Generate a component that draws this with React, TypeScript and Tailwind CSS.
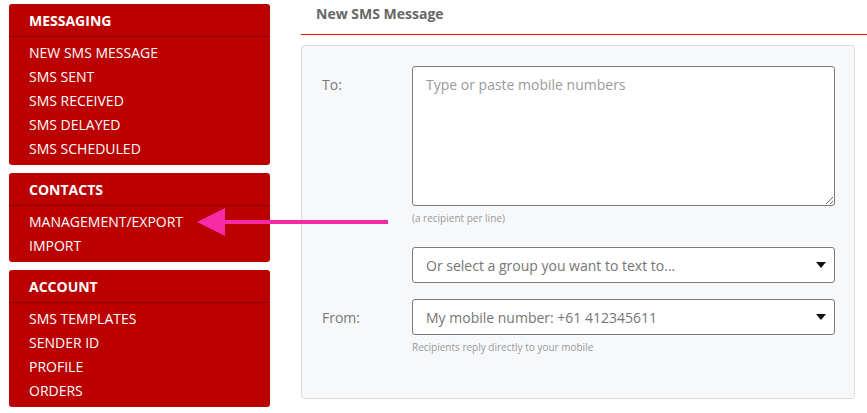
const SECTIONS = [
  { title: 'MESSAGING', items: ['NEW SMS MESSAGE', 'SMS SENT', 'SMS RECEIVED', 'SMS DELAYED', 'SMS SCHEDULED'] },
  { title: 'CONTACTS', items: ['MANAGEMENT/EXPORT', 'IMPORT'] },
  { title: 'ACCOUNT', items: ['SMS TEMPLATES', 'SENDER ID', 'PROFILE', 'ORDERS'] },
]

function Caret() {
  return (
    <svg width="10" height="6" viewBox="0 0 10 6" className="shrink-0">
      <path d="M0 0h10L5 6z" fill="#111" />
    </svg>
  )
}

function SelectBox({ text }: { text: string }) {
  return (
    <div className="flex h-9 items-center justify-between rounded-[3px] border border-[#7a7a7a] bg-white pl-[13px] pr-[8px] text-[14px] text-[#757575]">
      <span>{text}</span>
      <Caret />
    </div>
  )
}

export default function App() {
  return (
    <div
      className="relative flex h-[413px] w-[867px] overflow-hidden bg-white"
      style={{ fontFamily: '"Open Sans", "Liberation Sans", sans-serif' }}
    >
      {/* Sidebar */}
      <div className="ml-[9px] mt-[4px] flex w-[261px] shrink-0 flex-col gap-2">
        {SECTIONS.map((section) => (
          <div key={section.title} className="rounded-[3px] bg-[#bb0000] text-white">
            <div className="flex h-[33px] items-center border-b border-[#8e0000] pl-5 text-[14px] font-bold">
              {section.title}
            </div>
            <ul className="py-1 pl-5">
              {section.items.map((item) => (
                <li key={item} className="h-6 text-[14px] font-medium leading-6">
                  {item}
                </li>
              ))}
            </ul>
          </div>
        ))}
      </div>

      {/* Main */}
      <div className="ml-[31px] flex min-w-0 flex-1 flex-col">
        <div className="flex h-[35px] items-center border-b border-[#ff0000] pl-[15px] pb-[8px] text-[14px] font-bold text-[#666]">
          New SMS Message
        </div>
        <div className="mr-[12px] mt-[10px] rounded-[3px] border border-[#dcdcdc] bg-[#f7f8fa] pb-[43px] pl-[20px] pr-[19px] pt-[20px]">
          <div className="flex">
            <div className="w-[90px] shrink-0 pt-[8px] text-[14px] text-[#777]">To:</div>
            <div className="flex-1">
              <textarea
                placeholder="Type or paste mobile numbers"
                className="block h-[140px] w-full rounded-[3px] border border-[#7a7a7a] bg-white px-[13px] py-[7px] text-[14px] text-[#333] placeholder:text-[#9a9a9a] focus:outline-none"
              />
              <div className="mt-[5px] text-[10px] text-[#999]">(a recipient per line)</div>
              <div className="mt-[21px]">
                <SelectBox text="Or select a group you want to text to..." />
              </div>
            </div>
          </div>
          <div className="mt-[16px] flex">
            <div className="w-[90px] shrink-0 pt-[8px] text-[14px] text-[#777]">From:</div>
            <div className="flex-1">
              <SelectBox text="My mobile number: +61 412345611" />
              <div className="mt-[5px] text-[10px] text-[#999]">Recipients reply directly to your mobile</div>
            </div>
          </div>
        </div>
      </div>

      {/* Pointer arrow */}
      <svg className="pointer-events-none absolute left-[195px] top-[206px]" width="196" height="32" viewBox="0 0 196 32">
        <path d="M30 14h163v4H30z" fill="#f52ba6" />
        <path d="M2 16L30 2v28z" fill="#f52ba6" />
      </svg>
    </div>
  )
}
